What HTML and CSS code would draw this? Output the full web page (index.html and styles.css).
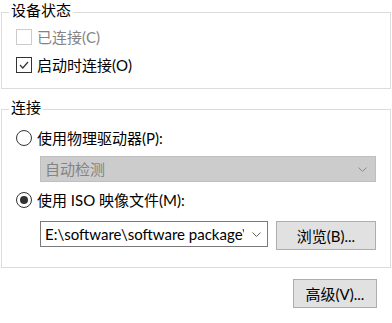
FILE: index.html
```html
<!DOCTYPE html>
<html lang="zh-CN">
<head>
    <meta charset="UTF-8">
    <title>CD/DVD</title>
    <link rel="stylesheet" href="styles.css">
</head>
<body>
    <div class="group status">
        <span class="group-title">设备状态</span>
        <div class="row disabled">
            <span class="check"></span>
            <span class="label">已连接(C)</span>
        </div>
        <div class="row">
            <span class="check checked">
                <svg width="10" height="8" viewBox="0 0 10 8"><polyline points="1,4 3.8,7 9,1" fill="none" stroke="#333" stroke-width="1.2"/></svg>
            </span>
            <span class="label">启动时连接(O)</span>
        </div>
    </div>

    <div class="group connect">
        <span class="group-title">连接</span>
        <div class="row first">
            <span class="radio"></span>
            <span class="label">使用物理驱动器(P):</span>
        </div>
        <div class="combo combo-off">
            <span class="combo-text">自动检测</span>
            <svg class="arrow" width="9" height="5" viewBox="0 0 9 5"><polyline points="0.5,0.5 4.5,4.5 8.5,0.5" fill="none" stroke="#8a8a8a" stroke-width="1"/></svg>
        </div>
        <div class="row">
            <span class="radio on"><span class="dot"></span></span>
            <span class="label">使用 ISO 映像文件(M):</span>
        </div>
        <div class="file-row">
            <div class="combo combo-edit">
                <span class="combo-text">E:\software\software package\</span>
                <svg class="arrow" width="9" height="5" viewBox="0 0 9 5"><polyline points="0.5,0.5 4.5,4.5 8.5,0.5" fill="none" stroke="#606060" stroke-width="1"/></svg>
            </div>
            <button class="btn browse">浏览(B)...</button>
        </div>
    </div>

    <div class="bottom">
        <button class="btn advanced">高级(V)...</button>
    </div>
</body>
</html>
```

FILE: styles.css
```css
*{margin:0;padding:0;box-sizing:border-box;}
html,body{
    width:392px;
    height:323px;
    overflow:hidden;
    background:#fff;
}
body{
    font-family:Lato,"Noto Sans CJK SC",sans-serif;
    font-size:15px;
    color:#000;
}

.group{
    position:relative;
    margin:0 1px;
    border:1px solid #dcdcdc;
    padding:0 0 0 14px;
}
.group-title{
    position:absolute;
    left:7px;
    top:-13px;
    line-height:20px;
    padding:0 2px;
    background:#fff;
}
.status{
    margin-top:12px;
    padding-top:10px;
    padding-bottom:9px;
}
.connect{
    margin-top:20px;
    padding-top:14px;
    padding-bottom:17px;
}

.row{
    height:28px;
    display:flex;
    align-items:center;
}
.label{
    margin-left:5px;
    line-height:20px;
}
.disabled .label{
    color:#838383;
}

.check{
    width:16px;
    height:16px;
    border:1px solid #333;
    display:flex;
    align-items:center;
    justify-content:center;
}
.disabled .check{
    border-color:#cccccc;
}
.radio{
    width:16px;
    height:16px;
    border:1px solid #333;
    border-radius:50%;
    display:flex;
    align-items:center;
    justify-content:center;
}
.radio .dot{
    width:8px;
    height:8px;
    border-radius:50%;
    background:#333;
}

.combo{
    height:26px;
    display:flex;
    align-items:center;
    margin-left:24px;
    padding:0 6px 0 4px;
}
.combo-text{
    flex:1;
    overflow:hidden;
    white-space:nowrap;
    line-height:20px;
}
.arrow{
    flex:none;
    margin-left:8px;
}
.combo-off{
    width:336px;
    margin-top:4px;
    margin-bottom:4px;
    background:#cccccc;
    border:1px solid #bfbfbf;
    color:#838383;
}
.combo-off .arrow{
    margin-right:2px;
}
.file-row{
    display:flex;
    align-items:flex-start;
    margin-top:7px;
}
.combo-edit{
    width:228px;
    background:#fff;
    border:1px solid #7a7a7a;
}

.btn{
    font-family:Lato,"Noto Sans CJK SC",sans-serif;
    font-size:15px;
    color:#000;
    background:#e1e1e1;
    border:1px solid #adadad;
    height:29px;
    line-height:20px;
}
.browse{
    width:100px;
    margin-left:8px;
}
.bottom{
    display:flex;
    padding-left:293px;
    margin-top:11px;
}
.advanced{
    width:84px;
}
```
